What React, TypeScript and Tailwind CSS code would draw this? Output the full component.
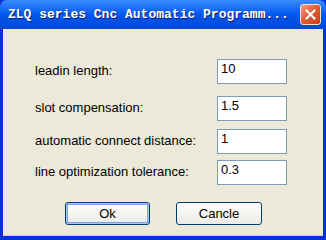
import React from "react"

const fields = [
  { label: "leadin length:", value: "10", gap: "mt-0" },
  { label: "slot compensation:", value: "1.5", gap: "mt-[12px]" },
  { label: "automatic connect distance:", value: "1", gap: "mt-[8px]" },
  { label: "line optimization tolerance:", value: "0.3", gap: "mt-[6px]" },
]

function CloseButton() {
  return (
    <div className="w-[21px] h-[21px] rounded-[3px] border border-[#F4E0D8] bg-gradient-to-br from-[#F0A080] via-[#E0582E] to-[#C2401C] flex items-center justify-center">
      <svg width="11" height="11" viewBox="0 0 11 11">
        <path d="M1.5 1.5 L9.5 9.5 M9.5 1.5 L1.5 9.5" stroke="white" strokeWidth="2" strokeLinecap="square" />
      </svg>
    </div>
  )
}

export default function App() {
  return (
    <div className="w-[326px] h-[240px] flex flex-col bg-[#0831D9] overflow-hidden" style={{ fontFamily: '"Liberation Sans", Arial, sans-serif' }}>
      {/* Title bar */}
      <div className="h-[29px] shrink-0 flex items-center pl-[8px] pr-[5px] bg-gradient-to-b from-[#3A8CFF] via-[#0058EE] to-[#0048D6] rounded-t-[7px]">
        <span
          className="flex-1 text-white font-bold text-[13px] whitespace-nowrap [text-shadow:1px_1px_0_#0A1E7A]"
          style={{ fontFamily: '"Liberation Mono", "Courier New", monospace' }}
        >
          ZLQ series Cnc Automatic Programm...
        </span>
        <CloseButton />
      </div>

      {/* Body */}
      <div className="flex-1 mx-[3px] mb-[4px] bg-[#ECE9D8] border-b border-[#D8D2BD] flex flex-col pt-[30px]">
        {fields.map((f) => (
          <div key={f.label} className={`flex items-center h-[25px] ${f.gap}`}>
            <span className="w-[214px] pl-[32px] text-[13px] text-black -mt-[2px]">{f.label}</span>
            <div className="w-[70px] h-[25px] border border-[#7F9DB9] bg-white text-[13px] text-black pl-[3px] pt-[1px] leading-[16px]">
              {f.value}
            </div>
          </div>
        ))}

        <div className="flex mt-[17px] pl-[62px] gap-[26px]">
          <button className="w-[85px] h-[23px] rounded-[3px] border border-[#003C74] bg-gradient-to-b from-[#FFFFFF] to-[#ECEBE6] text-[13px] text-black shadow-[inset_0_0_0_1px_#A9C4F5,inset_0_0_0_2px_#7BA2E7]">
            Ok
          </button>
          <button className="w-[86px] h-[23px] rounded-[3px] border border-[#003C74] bg-gradient-to-b from-[#FFFFFF] to-[#ECEBE6] text-[13px] text-black">
            Cancle
          </button>
        </div>
      </div>
    </div>
  )
}
